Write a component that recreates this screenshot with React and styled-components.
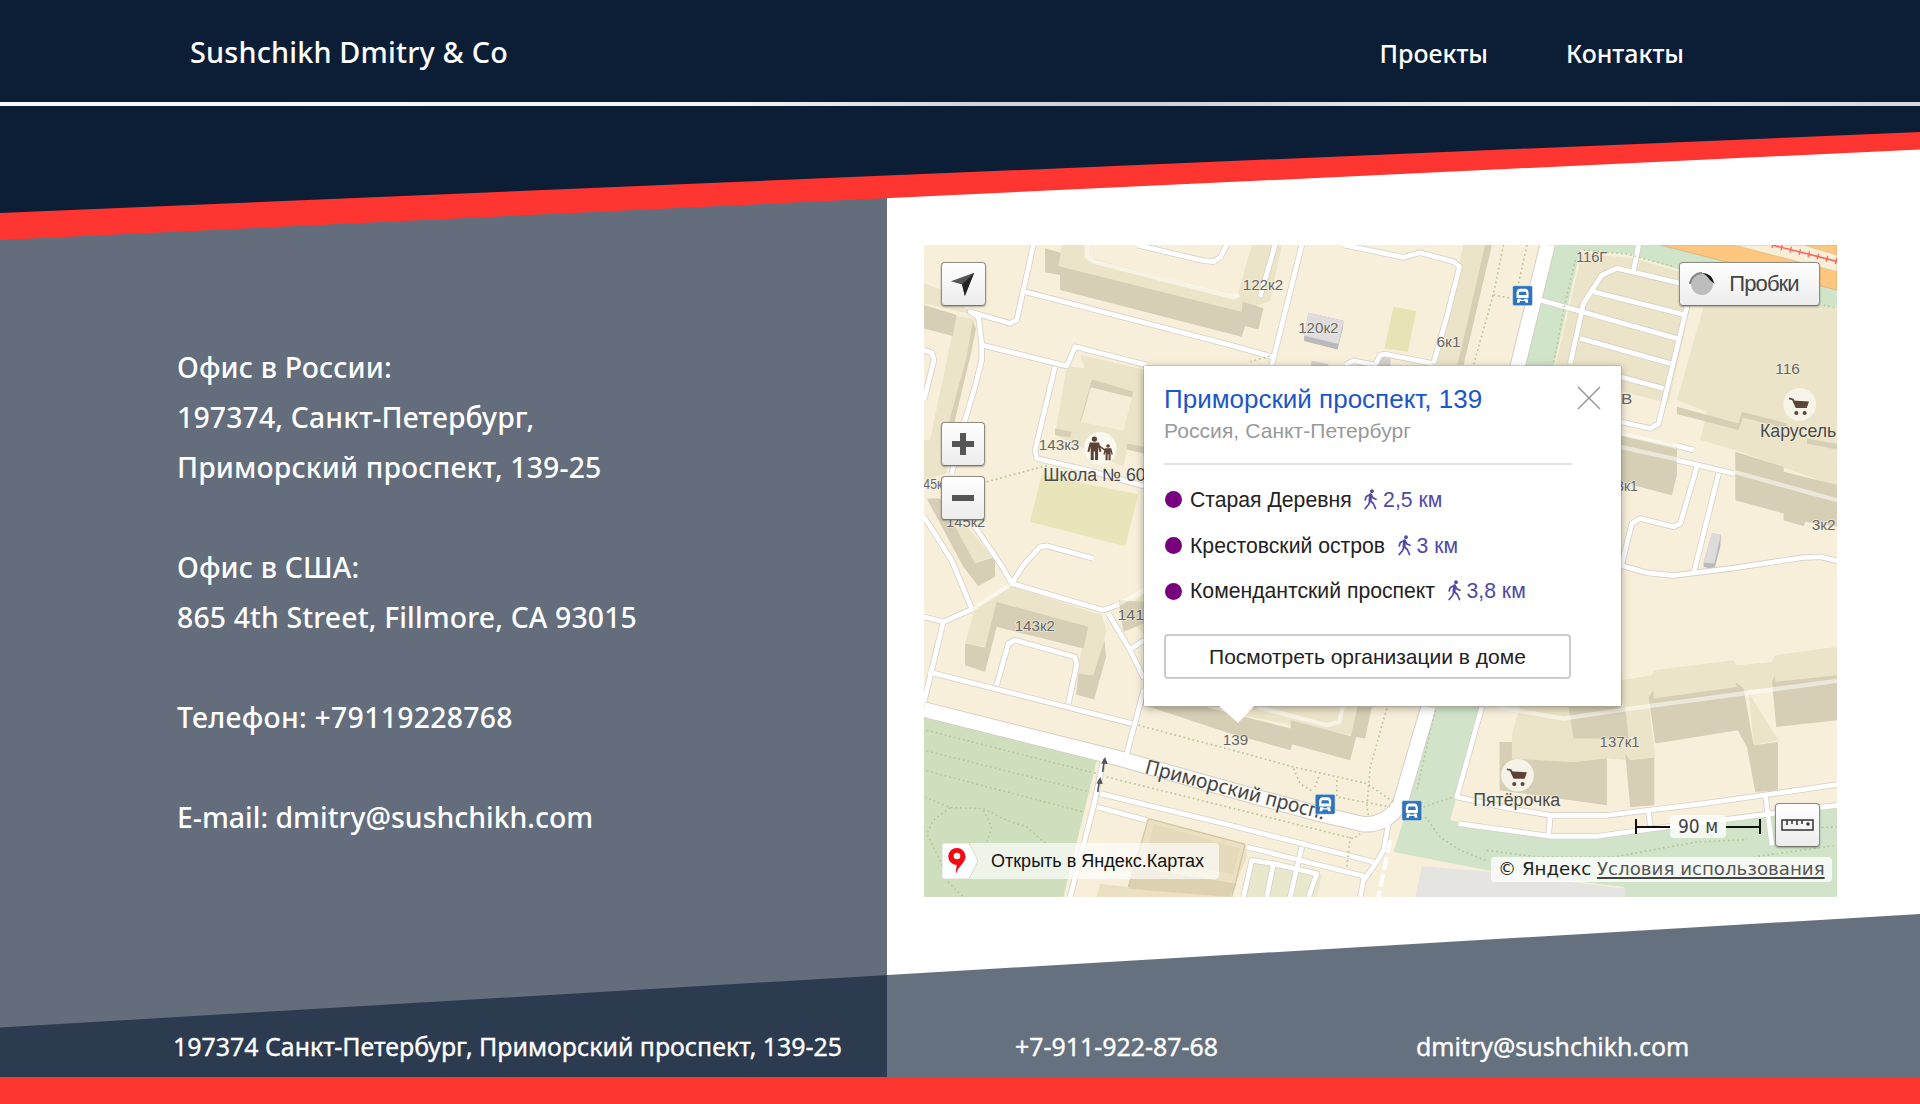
import React from "react";
import styled, { createGlobalStyle } from "styled-components";

const NAVY = "#0c1e35";
const RED = "#ff3531";
const SLATE = "#636d7c";

const GlobalStyle = createGlobalStyle`
  * { box-sizing: border-box; }
  body { margin: 0; background: #fff; overflow: hidden; }
`;

const Page = styled.div`
  width: 1920px;
  height: 1104px;
  display: flex;
  flex-direction: column;
  font-family: "Noto Sans", "Open Sans", sans-serif;
  font-weight: 500;
  color: #fff;
`;

const Header = styled.header`
  position: relative;
  z-index: 2;
  height: 240px;
  flex: none;
  background: ${RED};
  clip-path: polygon(0 0, 100% 0, 100% 149.5px, 0 240px);
`;

const HeaderInner = styled.div`
  height: 213px;
  background: ${NAVY};
  clip-path: polygon(0 0, 100% 0, 100% 132px, 0 213px);
`;

const TopBar = styled.div`
  height: 106px;
  padding: 0 236px 0 190px;
  display: flex;
  align-items: center;
  justify-content: space-between;
  border-bottom: 4px solid;
  border-image: linear-gradient(90deg, #fafafa 0, #f4f4f6 38%, #d2d2da 51%, #cfcfd6 60%, #f0f0f2 78%, #f0f0f2 84%, #d8d8e0 98%) 1;
`;

const Brand = styled.div`
  font-size: 28.8px;
  line-height: 40px;
  padding-top: 2px;
  letter-spacing: 0.18px;
`;

const Nav = styled.nav`
  display: flex;
  gap: 78px;
  padding-top: 3px;
`;

const NavLink = styled.a`
  font-size: 25px;
  line-height: 34px;
`;

const Main = styled.main`
  height: 927px;
  margin-top: -90px;
  flex: none;
  display: flex;
`;

const Contacts = styled.section`
  width: 887px;
  flex: none;
  background: ${SLATE};
  padding: 192px 0 0 177px;
`;

const Office = styled.div`
  margin-bottom: 50px;
`;

const Line = styled.div`
  font-size: 28.4px;
  line-height: 50px;
  letter-spacing: ${(p) => p.$tracking ?? 0.14}px;
  white-space: nowrap;
`;

const MapColumn = styled.section`
  flex: 1;
  padding: 95px 83px 0 37px;
`;

const MapFrame = styled.div`
  position: relative;
  height: 652px;
  width: 913px;
  overflow: hidden;
  font-family: "Liberation Sans", Arial, sans-serif;
  font-weight: 400;
  color: #222;
`;

const MapSvg = styled.svg`
  display: block;
  width: 913px;
  height: 652px;
`;

const MapButton = styled.button`
  position: absolute;
  left: ${(p) => p.$x}px;
  top: ${(p) => p.$y}px;
  width: ${(p) => p.$w || 45}px;
  height: 44px;
  padding: 0 ${(p) => p.$pad || 0}px 0 0;
  display: flex;
  align-items: center;
  justify-content: center;
  gap: ${(p) => p.$gap || 0}px;
  border: 1px solid #8f8c84;
  border-bottom-color: #77746c;
  border-radius: 4px;
  background: linear-gradient(#fff, #ececec);
  box-shadow: 0 1px 2px rgba(0, 0, 0, 0.3);
  font: 22px "Liberation Sans", Arial, sans-serif;
  letter-spacing: -0.9px;
  color: #444;
`;

const OpenLink = styled.a`
  position: absolute;
  left: 18px;
  top: 598px;
  width: 277px;
  height: 36px;
  display: flex;
  align-items: center;
  gap: 12px;
  border-radius: 4px;
  overflow: hidden;
  background: rgba(255, 255, 255, 0.66);
  font-size: 18px;
  color: #111;
  white-space: nowrap;
`;

const Scale = styled.div`
  position: absolute;
  left: 711px;
  top: 569px;
  width: 126px;
  height: 25px;
  display: flex;
  align-items: center;
  font: 19px "DejaVu Sans Condensed", "DejaVu Sans", sans-serif;
  color: #444;
`;

const ScaleArm = styled.span`
  flex: 1;
  height: 15px;
  border: 0 solid #111;
  border-width: ${(p) => (p.$end ? "0 2px 0 0" : "0 0 0 2px")};
  background: linear-gradient(#111, #111) center / 100% 2px no-repeat;
`;

const ScaleLabel = styled.span`
  width: 56px;
  line-height: 23px;
  text-align: center;
  border-radius: 4px;
  background: rgba(255, 255, 255, 0.75);
`;

const Copyright = styled.div`
  position: absolute;
  left: 567px;
  top: 612px;
  width: 341px;
  height: 25px;
  padding-left: 7px;
  line-height: 24px;
  border-radius: 4px;
  background: rgba(255, 255, 255, 0.78);
  font-family: "DejaVu Sans", sans-serif;
  font-size: 18.2px;
  color: #222;
  white-space: nowrap;
`;

const Terms = styled.a`
  color: #555;
  text-decoration: underline;
  text-decoration-color: #444;
  text-decoration-thickness: 2px;
  text-underline-offset: 2px;
  text-decoration-skip-ink: none;
`;

const Balloon = styled.div`
  position: absolute;
  left: 220px;
  top: 121px;
  width: 476.5px;
  height: 340px;
  padding: 17px 49px 0 20px;
  background: #fff;
  box-shadow: 0 2px 8px rgba(0, 0, 0, 0.35), 0 0 1px rgba(0, 0, 0, 0.6);
  &::after {
    content: "";
    position: absolute;
    left: 74px;
    top: 339px;
    border: solid transparent;
    border-width: 18px 17px 0 20px;
    border-top-color: #fff;
  }
`;

const BalloonTitle = styled.div`
  font-size: 26px;
  line-height: 32px;
  color: #1d56c9;
  white-space: nowrap;
`;

const BalloonSubtitle = styled.div`
  font-size: 21px;
  line-height: 30px;
  height: 50px;
  margin-bottom: 12px;
  padding-top: 1px;
  border-bottom: 2px solid #e3e3e3;
  letter-spacing: 0.08px;
  color: #999;
  white-space: nowrap;
`;

const Stations = styled.ul`
  list-style: none;
  margin: 0 0 20px;
  padding: 0;
`;

const Station = styled.li`
  height: 45.7px;
  display: flex;
  align-items: center;
  font-size: 21.2px;
  color: #222;
  white-space: nowrap;
`;

const Dot = styled.span`
  width: 17px;
  height: 17px;
  margin: 0 8px 0 1px;
  border-radius: 50%;
  background: #78007f;
`;

const Distance = styled.span`
  display: flex;
  align-items: center;
  gap: 6px;
  margin-left: 12.5px;
  color: #5049a6;
`;

const OrgButton = styled.button`
  display: block;
  width: 407px;
  height: 45px;
  padding: 0;
  border: 2px solid #ccc;
  border-radius: 4px;
  background: #fff;
  font: 21px "Liberation Sans", Arial, sans-serif;
  color: #222;
`;

const CloseIcon = styled.svg`
  position: absolute;
  left: 433px;
  top: 20px;
`;

const Footer = styled.footer`
  position: relative;
  height: 163px;
  margin-top: -163px;
  flex: none;
  padding: 0 233px 13px 173px;
  display: flex;
  align-items: flex-end;
  background: rgba(12, 30, 53, 0.63);
  clip-path: polygon(0 113.5px, 100% 0, 100% 100%, 0 100%);
  font-size: 24.9px;
  font-weight: 400;
  line-height: 36px;
  -webkit-text-stroke: 0.35px #fff;
`;

const FooterItem = styled.span`
  width: ${(p) => (p.$w ? p.$w + "px" : "auto")};
  flex: none;
  white-space: nowrap;
`;

const BottomBar = styled.div`
  flex: 1;
  background: ${RED};
`;

const road = (w) => ({ fill: "none", stroke: "#fff", strokeWidth: w, strokeLinejoin: "round" });

const LIGHT = [
  "425,15 505,15 500,50 950,172 995,15 1085,15 1050,182 965,215 415,78",
  "12,130 65,150 165,225 12,190",
  "110,228 165,238 150,330 100,560 80,700 12,720 12,600 30,600 95,290",
  "480,345 672,388 672,640 620,628 610,680 405,585 440,378 495,385",
  "165,1105 275,1038 545,1125 560,1170 525,1305 470,1300 500,1160 235,1085 195,1220 135,1210",
  "60,790 150,870 215,950 165,970 95,850",
  "1630,15 1715,15 1630,375 1540,375",
  "1985,40 2140,55 2330,110 2310,200 2245,490 1900,400",
  "2350,200 2750,200 2750,740 2445,630 2340,600 2360,515 2270,480",
  "1000,1400 1350,1400 1320,1490 930,1420",
  "1800,1400 2100,1320 2195,1305 2200,1290 2440,1260 2450,1275 2555,1265 2565,1245 2750,1220 2750,1320 2480,1350 2575,1500 2500,1515 2485,1355 2185,1390 2205,1550 2130,1560 2060,1555 1960,1565 1775,1555 1775,1480",
  "672,1060 672,1180 600,1120",
];

const SHADE = [
  "375,25 422,38 415,78 965,215 968,185 1030,205 1015,268 975,258 965,290 420,150 420,105 375,97",
  "12,195 110,225 98,288 12,265",
  "158,245 168,265 155,330 100,560 84,556 140,350",
  "515,418 640,455 635,472 510,442 485,545 480,542",
  "405,565 455,575 450,592 405,585",
  "620,610 672,620 672,640 620,628",
  "230,1085 505,1160 490,1225 230,1160 195,1295 135,1275 135,1210 195,1222",
  "475,1300 520,1305 553,1200 558,1250 522,1378 468,1363",
  "20,775 60,775 165,970 225,950 225,1010 175,1038 130,980",
  "595,1080 672,1085 672,1150 610,1175",
  "1695,15 1715,15 1630,375 1612,375",
  "2270,500 2455,550 2465,515 2600,550 2595,565 2468,532 2455,570 2270,522",
  "2660,595 2750,612 2750,628 2660,610",
  "2445,635 2590,680 2590,695 2750,735 2750,860 2655,845 2650,858 2590,840 2590,820 2445,780",
  "2100,585 2270,622 2270,705 2255,765 2100,725",
  "690,1400 860,1400 1112,1465 1112,1440 1292,1488 1312,1400 1355,1400 1335,1495 1308,1490 1290,1560 1115,1512 1112,1530 930,1480",
  "1738,1505 1775,1505 1775,1555 1960,1565 2060,1555 2060,1695 1738,1650",
  "1945,1400 2115,1400 2125,1495 1960,1495",
  "2185,1370 2200,1350 2200,1375 2450,1340 2445,1325 2470,1345 2500,1515 2573,1505 2573,1650 2505,1655 2480,1520 2452,1470 2205,1510",
  "2555,1325 2565,1305 2565,1325 2750,1305 2750,1440 2568,1460",
  "2115,1540 2130,1560 2202,1552 2202,1695 2130,1700",
];

const ROADS = [
  "340,15 310,150 290,240 270,250 150,215 175,230 185,310 185,360 165,440 135,540 95,700",
  "315,155 930,315 1055,350",
  "1145,15 1055,375",
  "650,15 850,62 880,65 900,52 920,15",
  "185,315 440,378 465,320 680,375",
  "405,380 345,630 350,655 500,690 672,738",
  "12,330 35,338 42,360 12,480",
  "275,1030 310,975 360,920 380,917 520,955",
  "12,830 95,960 155,1105",
  "165,860 250,985 275,1030 550,1110 590,1095",
  "12,1130 70,1145 160,1105",
  "70,1145 12,1385",
  "25,1295 635,1450",
  "565,1120 630,1230 672,1315",
  "630,1228 672,1200",
  "672,1345 620,1540",
  "230,1335 265,1210 285,1200 465,1250 470,1275 445,1390",
  "1065,15 1020,170",
  "1270,15 1450,52 1500,38 1600,65 1618,80 1580,230 1540,370",
  "1275,375 1300,362 1365,375 1380,345 1395,342 1535,370",
  "1950,370 1990,190 2045,105 2090,85 2280,130",
  "2020,155 2295,225",
  "1860,180 2270,295",
  "1980,295 2250,370",
  "2100,410 2230,445",
  "2300,200 2215,550 2190,565 2100,545",
  "2155,15 2140,90",
  "2330,680 2280,850 2260,860 2160,835 2135,850 2105,970",
  "2395,700 2320,1000",
  "2270,660 2440,700",
  "2270,617 2320,630",
  "2100,975 2180,998 2260,1006 2430,985 2650,952 2700,950 2750,962",
  "550,1560 520,1700 450,1970",
  "540,1660 930,1755 1360,1865",
  "530,1700 680,1740",
  "980,1820 1340,1910",
  "1405,1750 1390,1830 1370,1865 1330,1920 1320,1970",
  "1145,1820 1110,1970",
  "970,1970 995,1860 1060,1870 1190,1900 1165,1970",
  "1060,1870 1040,1970",
  "1685,1400 1610,1670 1770,1705 1890,1725 2060,1725 2350,1690 2750,1633",
  "1615,1750 1890,1788 2030,1788 2200,1765 2750,1695",
  "1890,1728 1885,1785",
  "2185,1715 2190,1755",
  "2535,1665 2555,1815",
];

const FAINT_ROADS = [
  "500,15 500,50 520,65 940,172 958,165",
  "160,1105 275,1030",
  "590,1095 672,1050",
  "1010,1400 1220,1455 1258,1445 1268,1400",
  "2100,580 2270,620",
  "2100,620 2440,695 2750,780",
  "1730,1400 1930,1435 2130,1405 2750,1322",
];

const PATHS = [
  "200,725 385,675", "990,365 1050,348",
  "20,1470 530,1600", "20,1532 510,1655", "20,1592 490,1715",
  "15,1670 90,1702 190,1705 260,1740 320,1760 380,1812",
  "90,1702 40,1740 20,1780 60,1860 80,1920 130,1970",
  "190,1710 215,1760 200,1810",
  "655,1455 930,1528 1120,1580 1340,1630 1420,1685",
  "560,1610 930,1702 1300,1795 1320,1780",
  "1400,1405 1350,1580 1340,1700 1345,1725",
  "1120,1585 1140,1630 1180,1655", "1195,1610 1185,1640",
  "1250,1620 1250,1670 1410,1700",
  "1750,15 1720,160 1660,375", "1820,15 1795,130", "1720,165 1775,175",
  "1990,30 2120,42 2260,80", "1965,60 1930,210 1900,370",
  "1545,1410 1490,1650", "1510,1700 1600,1670",
  "1515,1730 1560,1790 1620,1830 1700,1862",
  "1700,1830 1850,1850 2080,1850 2330,1805 2480,1798", "2500,1850 2750,1815", "2690,1762 2750,1760",
  "2710,195 2750,205", "1290,1790 1280,1880",
];

const LABELS = [
  [356, 629, 122, "143к3"], [10, 747, 57, "45к"], [78, 861, 118, "145к2"],
  [968, 151, 121, "122к2"], [1134, 279, 121, "120к2"], [1549, 322, 72, "6к1"],
  [1967, 67, 94, "116Г"], [2565, 401, 74, "116"], [2674, 871, 72, "3к2"],
  [2088, 753, 64, "3к1"], [2074, 493, 62, "5В"],
  [284, 1173, 121, "143к2"], [592, 1140, 102, "141к"], [908, 1513, 76, "139"], [2038, 1521, 120, "137к1"],
];

const NAMES = [
  [370, 722, 307, "Школа № 60"], [2519, 590, 229, "Карусель"], [1659, 1696, 261, "Пятёрочка"],
];

const Cart = ({ x, y }) => (
  <g transform={`translate(${x} ${y})`}>
    <circle r="49" fill="#f7f3ea" opacity=".95" />
    <path d="M-32 -18 L-20 -15 L-10 8 L22 8" fill="none" stroke="#5d4237" strokeWidth="5" />
    <path d="M-22 -12 L28 -9 L23 6 L-12 8Z" fill="#5d4237" />
    <circle cx="-10" cy="26" r="6" fill="#5d4237" />
    <circle cx="15" cy="26" r="6" fill="#5d4237" />
  </g>
);

const Bus = ({ x, y }) => (
  <g transform={`translate(${x} ${y})`}>
    <rect x="-30" y="-30" width="60" height="60" rx="5" fill="#2f74ba" stroke="#e7eef2" strokeWidth="2" />
    <path d="M-10 -21H10Q16 -20 18 -11V7H-18V-11Q-16 -20 -10 -21Z" fill="#fff" />
    <path d="M-10 -12H10L12 -2H-12Z" fill="#2f74ba" />
    <path d="M-15 9H-5L-9 21H-17ZM15 9H5L9 21H17ZM-7 12H7V16H-7Z" fill="#fff" />
  </g>
);

const Person = ({ x, y, s }) => (
  <g transform={`translate(${x} ${y}) scale(${s})`} fill="#5d4237">
    <circle cy="-27" r="8" />
    <path d="M-14 -17H14L21 10L15 12L11 -4V36H2V10H-2V36H-11V-4L-15 12L-21 10Z" />
  </g>
);

const MapDrawing = () => (
  <MapSvg viewBox="12 15 2738 1955" preserveAspectRatio="none">
    <rect x="12" y="15" width="2738" height="1955" fill="#f7efda" />
    <polygon points="1905,15 2220,15 2750,140 2750,212 2280,90 2130,42 1980,30 1900,380 1813,380" fill="#d0e4c9" />
    <polygon points="2220,15 2750,15 2750,150" fill="#fec67f" stroke="#d9a863" strokeWidth="2" />
    <polygon points="2440,15 2650,15 2750,45 2750,95" fill="#f8efd9" stroke="#d9b886" strokeWidth="2" />
    <path d="M2555 15L2750 64" stroke="#ff6560" strokeWidth="5" fill="none" />
    <path d="M2555 15L2750 64" stroke="#ff6560" strokeWidth="18" strokeDasharray="4 24" fill="none" />
    <polygon points="12,1430 530,1560 430,1970 12,1970" fill="#cfdfbe" />
    <polygon points="1545,1400 1680,1400 1590,1740 1890,1790 2060,1790 2750,1700 2750,1970 2115,1970 2110,1940 1700,1890 1420,1835 1450,1740" fill="#d1e4c9" />
    <polygon points="1505,1878 1720,1895 2115,1945 2115,1970 1485,1970" fill="#e6e4e1" />
    <polygon points="685,1735 975,1812 980,1850 930,1970 530,1970 540,1930 625,1940" fill="#ebe1c2" />
    <polygon points="700,1750 960,1825 940,1900 675,1860" fill="#e5dabb" />
    <polygon points="640,1880 950,1930 930,1970 625,1945" fill="#ddd1b1" />
    <path d="M685 1735L975 1812L935 1970M685 1735L625 1940" stroke="#d2c6a6" strokeWidth="4" fill="none" />
    <polygon points="990,1865 1205,1905 1190,1970 970,1970" fill="#e9e7cc" />
    {LIGHT.map((p) => <polygon key={p} points={p} fill="#ece4c8" />)}
    {SHADE.map((p) => <polygon key={p} points={p} fill="#d6ceb5" />)}
    <polygon points="515,442 635,472 610,572 482,545" fill="#f6edd6" />
    <polygon points="365,705 655,762 615,918 330,845" fill="#e7e5b9" />
    <polygon points="1420,200 1488,213 1463,335 1393,325" fill="#e7e3b4" />
    <polygon points="1165,218 1270,242 1268,265 1252,328 1152,303 1152,288" fill="#b9b8bb" />
    <polygon points="1165,218 1270,242 1255,312 1152,287" fill="#dedcdd" />
    <polygon points="1378,350 1412,355 1410,378 1372,378" fill="#d4d1cb" />
    <polygon points="1173,362 1225,372 1225,380 1173,380" fill="#d4d1cb" />
    <polygon points="2375,880 2402,882 2400,920 2382,988 2350,980 2350,968" fill="#b9b8bb" />
    <polygon points="2375,880 2402,882 2382,970 2350,968" fill="#dedcda" />
    {FAINT_ROADS.map((p) => <polyline key={p} points={p} {...road(13)} opacity=".5" />)}
    {ROADS.map((p) => <polyline key={p} points={p} {...road(19)} stroke="#d6d2ca" />)}
    <path d="M12 1408L580 1550L930 1648L1185 1718L1330 1752Q1400 1755 1440 1690L1525 1400M1882 15L1792 380" {...road(49)} stroke="#d3cfc8" />
    {ROADS.map((p) => <polyline key={p} points={p} {...road(14)} />)}
    <path d="M12 1408L580 1550L930 1648L1185 1718L1330 1752Q1400 1755 1440 1690L1525 1400M1882 15L1792 380" {...road(43)} />
    <path d="M1410 1800L1375 1970" {...road(12)} strokeDasharray="38 14" />
    {PATHS.map((p) => (
      <polyline key={p} points={p} fill="none" stroke="#b5c795" strokeWidth="5" strokeDasharray="5 9" />
    ))}
    <path d="M548 1595L553 1556M533 1655L539 1616" stroke="#555" strokeWidth="5" />
    <path d="M543 1570L555 1550L563 1571ZM529 1630L541 1610L548 1631Z" fill="#555" />

    <g fontFamily="Liberation Sans, Arial, sans-serif" fill="#666" stroke="#f8f3e4" strokeWidth="5" strokeOpacity=".65" paintOrder="stroke" fontSize="43">
      {LABELS.map(([x, y, w, t]) => <text key={t} x={x} y={y} textLength={w} lengthAdjust="spacingAndGlyphs">{t}</text>)}
      <g fontSize="53" fill="#494949">
        {NAMES.map(([x, y, w, t]) => <text key={t} x={x} y={y} textLength={w} lengthAdjust="spacingAndGlyphs">{t}</text>)}
      </g>
      <text fontFamily="Noto Sans, Open Sans, sans-serif" fontSize="60" fill="#444" transform="translate(672 1598) rotate(14.6)" textLength="555" lengthAdjust="spacingAndGlyphs">Приморский просп.</text>
    </g>
    <circle cx="541" cy="625" r="49" fill="#fbf8ef" />
    <Person x={523} y={624} s={1} />
    <Person x={564} y={636} s={0.68} />
    <path d="M538 618L555 630" stroke="#5d4237" strokeWidth="4" />
    <Cart x={2638} y={493} />
    <Cart x={1792} y={1605} />
    <Bus x={1807} y={167} />
    <Bus x={1215} y={1692} />
    <Bus x={1475} y={1711} />
  </MapSvg>
);

const WalkIcon = () => (
  <svg width="13" height="22" viewBox="0 0 13 22" fill="none" stroke="#5049a6" strokeWidth="1.7" strokeLinecap="round" strokeLinejoin="round">
    <circle cx="8" cy="2.2" r="1.9" fill="#5049a6" stroke="none" />
    <path d="M6.700 5.800L6 11.500" strokeWidth="3" />
    <path d="M6.300 5.500L2.300 7.600L1.200 11M7.500 6.500L9 9L12 10.200M5.800 12L4.600 15.500L1.200 19.500M6.500 12L9.300 14.500L11.500 19.500" />
  </svg>
);

const STATIONS = [
  ["Старая Деревня", "2,5 км"],
  ["Крестовский остров", "3 км"],
  ["Комендантский проспект", "3,8 км"],
];

export default function App() {
  return (
    <>
      <GlobalStyle />
      <Page>
        <Header>
          <HeaderInner>
            <TopBar>
              <Brand>Sushchikh Dmitry &amp; Co</Brand>
              <Nav>
                <NavLink>Проекты</NavLink>
                <NavLink>Контакты</NavLink>
              </Nav>
            </TopBar>
          </HeaderInner>
        </Header>
        <Main>
          <Contacts>
            <Office>
              <Line>Офис в России:</Line>
              <Line>197374, Санкт-Петербург,</Line>
              <Line>Приморский проспект, 139-25</Line>
            </Office>
            <Office>
              <Line>Офис в США:</Line>
              <Line>865 4th Street, Fillmore, CA 93015</Line>
            </Office>
            <Office>
              <Line $tracking={0.27}>Телефон: +79119228768</Line>
            </Office>
            <Line $tracking={0}>E-mail: dmitry@sushchikh.com</Line>
          </Contacts>
          <MapColumn>
            <MapFrame>
              <MapDrawing />
              <MapButton $x={17} $y={17} $pad={2}>
                <svg width="26" height="26" viewBox="0 0 28 28"><path d="M26 2L1 11L13 14.500L16 27Z" fill="#555" /><path d="M26 2L13 14.500L16 27Z" fill="#222" /></svg>
              </MapButton>
              <MapButton $x={17} $y={177} $w={44}>
                <svg width="24" height="24" viewBox="0 0 24 24"><path d="M12 1V23M1 12H23" stroke="#555" strokeWidth="6" /></svg>
              </MapButton>
              <MapButton $x={17} $y={231} $w={44}>
                <svg width="24" height="24" viewBox="0 0 24 24"><path d="M1 12H23" stroke="#555" strokeWidth="6" /></svg>
              </MapButton>
              <MapButton $x={755} $y={17} $w={141} $gap={14} $pad={11}>
                <svg width="26" height="24" viewBox="0 0 26 24">
                  <circle cx="13" cy="12" r="11" fill="#bdbdbd" />
                  <path d="M1 12A12 12 0 0 1 13 1" stroke="#888" strokeWidth="2" fill="none" />
                  <path d="M13 1Q23 1 25.500 12L21 8Q18 3 13 1Z" fill="#111" />
                </svg>
                <span>Пробки</span>
              </MapButton>
              <OpenLink>
                <svg width="37" height="36" viewBox="0 0 37 36">
                  <path d="M0 0H27L36 18L27 36H0Z" fill="#fff" stroke="#d8d8d0" />
                  <path d="M15 5A8.500 8.500 0 0 1 23.500 13.500C23.500 20 16 23 14 31C13.500 27 15 24 14.500 22A8.500 8.500 0 0 1 15 5Z" fill="#f20a12" />
                  <circle cx="15" cy="13" r="3.300" fill="#fff" />
                </svg>
                <span>Открыть в Яндекс.Картах</span>
              </OpenLink>
              <Scale>
                <ScaleArm />
                <ScaleLabel>90 м</ScaleLabel>
                <ScaleArm $end />
              </Scale>
              <MapButton $x={851} $y={558}>
                <svg width="33" height="12" viewBox="0 0 33 12" fill="none" stroke="#333" strokeWidth="1.500"><path d="M1 1H32V11H1ZM6 1V6M11 1V5M16 1V6M21 1V5" /><circle cx="27" cy="5" r="1" fill="#333" /></svg>
              </MapButton>
              <Copyright>© Яндекс <Terms>Условия использования</Terms></Copyright>
              <Balloon>
                <BalloonTitle>Приморский проспект, 139</BalloonTitle>
                <BalloonSubtitle>Россия, Санкт-Петербург</BalloonSubtitle>
                <Stations>
                  {STATIONS.map(([name, km]) => (
                    <Station key={name}>
                      <Dot />
                      <span>{name}</span>
                      <Distance><WalkIcon /><span>{km}</span></Distance>
                    </Station>
                  ))}
                </Stations>
                <OrgButton>Посмотреть организации в доме</OrgButton>
                <CloseIcon width="24" height="24" viewBox="0 0 24 24" stroke="#999" strokeWidth="1.500"><path d="M1 1L23 23M23 1L1 23" /></CloseIcon>
              </Balloon>
            </MapFrame>
          </MapColumn>
        </Main>
        <Footer>
          <FooterItem $w={842}>197374 Санкт-Петербург, Приморский проспект, 139-25</FooterItem>
          <FooterItem $w={401}>+7-911-922-87-68</FooterItem>
          <FooterItem>dmitry@sushchikh.com</FooterItem>
        </Footer>
        <BottomBar />
      </Page>
    </>
  );
}
